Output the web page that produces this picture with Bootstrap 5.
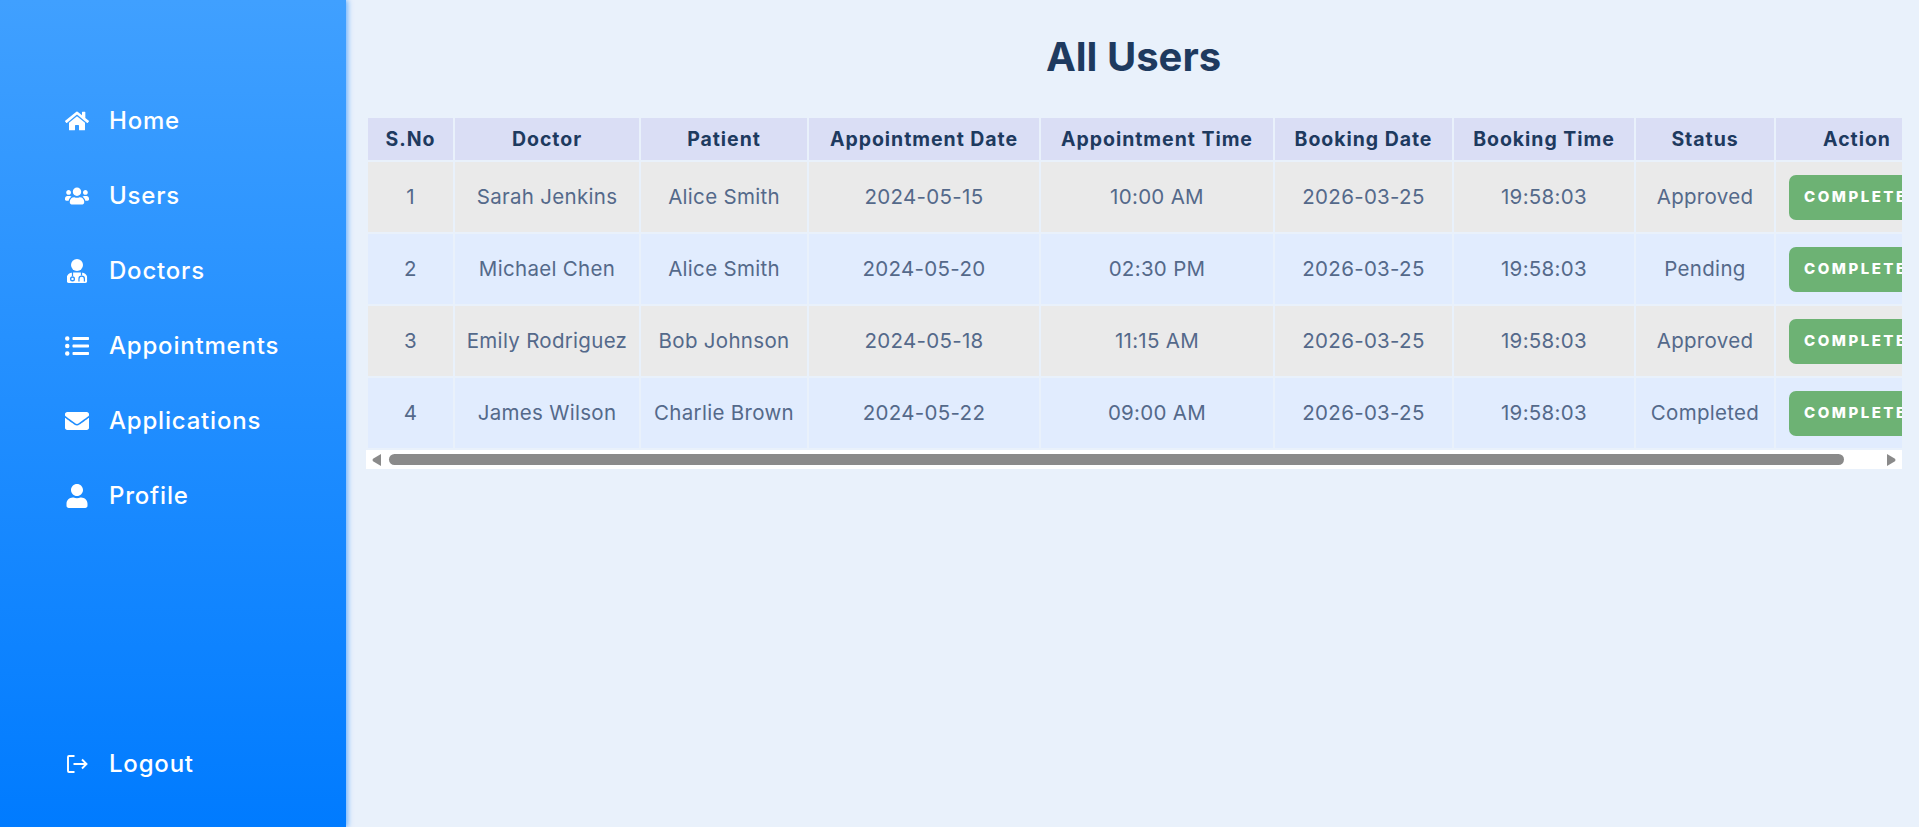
<!DOCTYPE html>
<html lang="en"><head><meta charset="utf-8"><title>All Users</title>
<link rel="stylesheet" href="https://cdn.jsdelivr.net/npm/bootstrap@5.3.0/dist/css/bootstrap.min.css">
<style>
html,body{height:100%;overflow:hidden}
body{background:#e9f1fb;font-family:Inter,"Noto Sans",sans-serif}
.shell{height:827px}
.sidebar{width:346px;flex:none;background:linear-gradient(180deg,#40a0ff,#007bff);box-shadow:2px 0 5px rgba(0,123,255,.5);padding:83px 0 26px 65px;z-index:2}
.side-link{color:#fff;font-size:24px;font-weight:500;height:75px;gap:20px;text-decoration:none;line-height:1;letter-spacing:.8px}
.side-link:hover{color:#fff}
.side-link svg{width:24px;height:24px;fill:#fff;flex:none}
.side-link .exit-icon{fill:none;stroke:#fff;stroke-width:1.9}
.main-area{min-width:0;padding:0 17px 0 22px}
.page-title{color:#1e3a5f;font-size:40px;font-weight:700;line-height:1;margin:37px 0 41px;padding-right:3px}
.clip-box{width:1534px}
.users-grid{table-layout:fixed;width:1574px;border-collapse:separate;border-spacing:0;margin:0;--bs-table-bg:transparent;--bs-table-color:#54698a}
.users-grid th,.users-grid td{text-align:center;vertical-align:middle;border:0;border-right:2px solid #e9f1fb;border-bottom:2px solid #e9f1fb;padding:0;white-space:nowrap;box-shadow:none}
.users-grid th{background:#dadef5;color:#1e3a5f;font-size:19.5px;font-weight:700;height:44px;letter-spacing:.95px;padding-top:1px}
.users-grid td{height:72px;font-size:20.5px;font-weight:400;color:#54698a;letter-spacing:.3px}
.users-grid tbody tr:nth-child(odd) td{background:#eaeaea}
.users-grid tbody tr:nth-child(even) td{background:#e1ecfe}
.users-grid td:last-child{text-align:left;padding-left:13px}
.users-grid th:last-child{padding-right:4px}
.users-grid th:last-child,.users-grid td:last-child{border-right:0}
.done-btn{display:inline-block;background:#6db274;color:#fff;border:0;border-radius:7px;height:45px;width:150px;font-size:15px;font-weight:800;letter-spacing:2.5px;padding:0 0 0 15px;text-align:left;vertical-align:middle}
.done-btn:hover{background:#6db274;color:#fff}
.c1{width:87px}.c2{width:186px}.c3{width:168px}.c4{width:232px}.c5{width:234px}.c6{width:179px}.c7{width:182px}.c8{width:140px}.c9{width:166px}
.fake-bar{height:19px;background:#fff;padding:0 6px 0 6px;margin-left:-2px}
.fake-bar svg{width:9px;height:12px;fill:#8a8a8a;flex:none}
.bar-thumb{width:1455px;height:11px;background:#8a8a8a;border-radius:6px;margin-left:8px}
</style></head><body>
<div class="shell d-flex">
<nav class="sidebar d-flex flex-column">
<a class="side-link d-flex align-items-center" href="#"><svg viewBox="0 0 576 512"><path d="M280.37 148.26L96 300.11V464a16 16 0 0 0 16 16l112.06-.29a16 16 0 0 0 15.92-16V368a16 16 0 0 1 16-16h64a16 16 0 0 1 16 16v95.64a16 16 0 0 0 16 16.05L464 480a16 16 0 0 0 16-16V300L295.67 148.26a12.19 12.19 0 0 0-15.3 0zM571.6 251.47L488 182.56V44.05a12 12 0 0 0-12-12h-56a12 12 0 0 0-12 12v72.61L318.47 43a48 48 0 0 0-61 0L4.34 251.47a12 12 0 0 0-1.6 16.9l25.5 31A12 12 0 0 0 45.15 301l235.22-193.74a12.19 12.19 0 0 1 15.3 0L530.9 301a12 12 0 0 0 16.9-1.6l25.5-31a12 12 0 0 0-1.7-16.93z"/></svg>Home</a>
<a class="side-link d-flex align-items-center" href="#"><svg viewBox="0 0 640 512"><path d="M96 224c35.3 0 64-28.7 64-64s-28.7-64-64-64-64 28.7-64 64 28.7 64 64 64zm448 0c35.3 0 64-28.7 64-64s-28.7-64-64-64-64 28.7-64 64 28.7 64 64 64zm32 32h-64c-17.6 0-33.5 7.1-45.1 18.6 40.3 22.1 68.9 62 75.1 109.4h66c17.7 0 32-14.3 32-32v-32c0-35.3-28.7-64-64-64zm-256 0c61.9 0 112-50.1 112-112S381.9 32 320 32 208 82.1 208 144s50.1 112 112 112zm76.8 32h-8.3c-20.8 10-43.9 16-68.5 16s-47.6-6-68.5-16h-8.3C179.6 288 128 339.6 128 403.2V432c0 26.5 21.5 48 48 48h288c26.5 0 48-21.5 48-48v-28.8c0-63.600-51.600-115.200-115.200-115.200zm-223.700-13.400C161.500 263.100 145.600 256 128 256H64c-35.300 0-64 28.700-64 64v32c0 17.700 14.300 32 32 32h65.900c6.300-47.400 34.900-87.300 75.200-109.400z"/></svg>Users</a>
<a class="side-link d-flex align-items-center" href="#"><svg viewBox="0 0 448 512"><defs><mask id="steth" maskUnits="userSpaceOnUse" x="0" y="0" width="448" height="512"><rect width="448" height="512" fill="#fff"/><path d="M128 270V370M320 270V345M266 478V424a58 58 0 0 1 116 0V478" fill="none" stroke="#000" stroke-width="26"/><circle cx="128" cy="424" r="54" fill="#000"/><circle cx="128" cy="424" r="25" fill="#fff"/></mask></defs><circle cx="224" cy="128" r="128"/><path mask="url(#steth)" d="M134 288h180C388 288 448 348 448 422v42c0 26.500-21.500 48-48 48H48c-26.500 0-48-21.500-48-48v-42C0 348 60 288 134 288z"/></svg>Doctors</a>
<a class="side-link d-flex align-items-center" href="#"><svg viewBox="0 0 512 512"><path d="M48 48a48 48 0 1 0 48 48 48 48 0 0 0-48-48zm0 160a48 48 0 1 0 48 48 48 48 0 0 0-48-48zm0 160a48 48 0 1 0 48 48 48 48 0 0 0-48-48zm448 16H176a16 16 0 0 0-16 16v32a16 16 0 0 0 16 16h320a16 16 0 0 0 16-16v-32a16 16 0 0 0-16-16zm0-320H176a16 16 0 0 0-16 16v32a16 16 0 0 0 16 16h320a16 16 0 0 0 16-16V80a16 16 0 0 0-16-16zm0 160H176a16 16 0 0 0-16 16v32a16 16 0 0 0 16 16h320a16 16 0 0 0 16-16v-32a16 16 0 0 0-16-16z"/></svg>Appointments</a>
<a class="side-link d-flex align-items-center" href="#"><svg viewBox="0 0 512 512"><path d="M502.3 190.8c3.9-3.1 9.7-.2 9.7 4.700V400c0 26.500-21.500 48-48 48H48c-26.500 0-48-21.500-48-48V195.600c0-5 5.700-7.800 9.700-4.700 22.400 17.400 52.100 39.500 154.100 113.600 21.100 15.400 56.700 47.800 92.200 47.600 35.700.3 72-32.800 92.300-47.600 102-74.100 131.600-96.300 154-113.700zM256 320c23.200.4 56.600-29.200 73.400-41.400 132.700-96.300 142.800-104.700 173.400-128.700 5.800-4.500 9.200-11.500 9.200-18.900v-19c0-26.500-21.500-48-48-48H48C21.500 64 0 85.500 0 112v19c0 7.400 3.400 14.300 9.200 18.900 30.600 23.900 40.700 32.400 173.400 128.700 16.800 12.200 50.200 41.800 73.400 41.400z"/></svg>Applications</a>
<a class="side-link d-flex align-items-center" href="#"><svg viewBox="0 0 448 512"><path d="M224 256c70.700 0 128-57.300 128-128S294.700 0 224 0 96 57.300 96 128s57.300 128 128 128zm89.600 32h-16.700c-22.200 10.200-46.900 16-72.900 16s-50.600-5.800-72.900-16h-16.700C60.200 288 0 348.200 0 422.400V464c0 26.500 21.500 48 48 48h352c26.500 0 48-21.500 48-48v-41.600c0-74.200-60.200-134.400-134.400-134.400z"/></svg>Profile</a>
<a class="side-link d-flex align-items-center mt-auto" href="#"><svg class="exit-icon" viewBox="0 0 24 24"><path d="M9.500 4H4a1 1 0 0 0-1 1v14a1 1 0 0 0 1 1h5.500M8.500 12H21.500M17 7.500 21.500 12 17 16.500"/></svg>Logout</a>
</nav>
<main class="main-area flex-grow-1">
<h1 class="page-title text-center">All Users</h1>
<div class="clip-box">
<div class="overflow-hidden">
<table class="table users-grid">
<colgroup><col class="c1"><col class="c2"><col class="c3"><col class="c4"><col class="c5"><col class="c6"><col class="c7"><col class="c8"><col class="c9"></colgroup>
<thead><tr><th>S.No</th><th>Doctor</th><th>Patient</th><th>Appointment Date</th><th>Appointment Time</th><th>Booking Date</th><th>Booking Time</th><th>Status</th><th>Action</th></tr></thead>
<tbody>
<tr><td>1</td><td>Sarah Jenkins</td><td>Alice Smith</td><td>2024-05-15</td><td>10:00 AM</td><td>2026-03-25</td><td>19:58:03</td><td>Approved</td><td><button class="btn done-btn">COMPLETE</button></td></tr>
<tr><td>2</td><td>Michael Chen</td><td>Alice Smith</td><td>2024-05-20</td><td>02:30 PM</td><td>2026-03-25</td><td>19:58:03</td><td>Pending</td><td><button class="btn done-btn">COMPLETE</button></td></tr>
<tr><td>3</td><td>Emily Rodriguez</td><td>Bob Johnson</td><td>2024-05-18</td><td>11:15 AM</td><td>2026-03-25</td><td>19:58:03</td><td>Approved</td><td><button class="btn done-btn">COMPLETE</button></td></tr>
<tr><td>4</td><td>James Wilson</td><td>Charlie Brown</td><td>2024-05-22</td><td>09:00 AM</td><td>2026-03-25</td><td>19:58:03</td><td>Completed</td><td><button class="btn done-btn">COMPLETE</button></td></tr>
</tbody></table>
</div>
<div class="fake-bar d-flex align-items-center">
<svg viewBox="0 0 9 12"><path d="M9 0V12L1 7.200Q0 6 1 4.800z"/></svg>
<div class="bar-thumb"></div>
<svg class="ms-auto" viewBox="0 0 9 12"><path d="M0 0V12L8 7.200Q9 6 8 4.800z"/></svg>
</div>
</div>
</main>
</div>
<script src="https://cdn.jsdelivr.net/npm/bootstrap@5.3.0/dist/js/bootstrap.bundle.min.js"></script>
</body></html>
